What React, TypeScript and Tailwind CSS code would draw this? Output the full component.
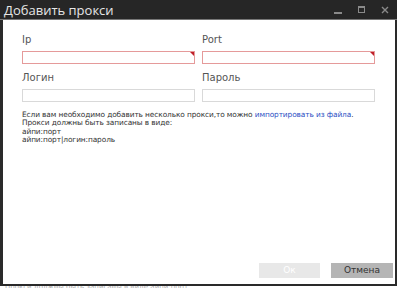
import React from "react";

function Field({ label, required }: { label: string; required?: boolean }) {
  return (
    <div className="flex flex-col">
      <label className="text-[10px] leading-[12px] text-[#555] mb-[5px]">{label}</label>
      <div className="relative">
        <input
          className={`block w-full h-[13px] bg-white outline-none border ${
            required ? "border-[#e59a9a]" : "border-[#d9d9d9]"
          }`}
        />
        {required && (
          <span className="absolute right-[1px] top-[1px] w-0 h-0 border-t-[4px] border-l-[4px] border-t-[#c0202a] border-l-transparent" />
        )}
      </div>
    </div>
  );
}

export default function App() {
  return (
    <div
      className="w-[399px] h-[288px] bg-white overflow-hidden"
      style={{ fontFamily: "'DejaVu Sans', Verdana, sans-serif" }}
    >
      <div className="w-[397px] h-[286px] flex flex-col border-l-[3px] border-r-2 border-b-2 border-[#2a2a2a]">
        <div className="h-[20px] bg-[#262626] border-b border-[#777] flex items-center -ml-[3px] -mr-[2px] shrink-0">
          <span
            className="pl-[4px] text-[13px] leading-[18px] text-[#e6e6e6]"
            style={{ fontFamily: "'Open Sans', 'Noto Sans', sans-serif" }}
          >
            Добавить прокси
          </span>
          <div className="ml-auto flex items-center gap-[16px] pr-[8px]">
            <svg width="8" height="8" viewBox="0 0 8 8" className="mt-[3px]">
              <rect x="0" y="5" width="8" height="2" fill="#8a8a8a" />
            </svg>
            <svg width="7" height="7" viewBox="0 0 7 7">
              <rect x="0.5" y="0.5" width="6" height="6" fill="none" stroke="#8a8a8a" />
              <rect x="0" y="0" width="7" height="2" fill="#8a8a8a" />
            </svg>
            <svg width="8" height="8" viewBox="0 0 8 8">
              <path d="M1 1L7 7M7 1L1 7" stroke="#8a8a8a" strokeWidth="1.4" />
            </svg>
          </div>
        </div>

        <div className="flex-1 flex flex-col pl-[19px] pr-[20px] pt-[14px] pb-[6px]">
          <div className="grid grid-cols-2 gap-x-[7px] gap-y-[8px]">
            <Field label="Ip" required />
            <Field label="Port" required />
            <Field label="Логин" />
            <Field label="Пароль" />
          </div>

          <div className="mt-[9px] text-[7.4px] leading-[8.4px] tracking-[-0.1px] text-[#333] whitespace-nowrap -mr-[20px]">
            <div>
              Если вам необходимо добавить несколько прокси,то можно{" "}
              <a className="text-[#2b4fc4]">импортировать из файла</a>.
            </div>
            <div>Прокси должны быть записаны в виде:</div>
            <div>айпи:порт</div>
            <div>айпи:порт|логин:пароль</div>
          </div>

          <div className="mt-auto flex justify-end gap-[11px] -mr-[18px]">
            <button className="w-[61px] h-[15px] bg-[#e8e8e8] text-white text-[9px] leading-[15px]">
              Ок
            </button>
            <button className="w-[62px] h-[15px] bg-[#b5b5b5] text-[#333] text-[9px] leading-[15px]">
              Отмена
            </button>
          </div>
        </div>
      </div>
      <div className="h-[2px] overflow-hidden pl-[5px] text-[7px] leading-[3px] text-[#aaa] whitespace-nowrap">
        Прокси должны быть записаны в виде айпи:порт
      </div>
    </div>
  );
}
